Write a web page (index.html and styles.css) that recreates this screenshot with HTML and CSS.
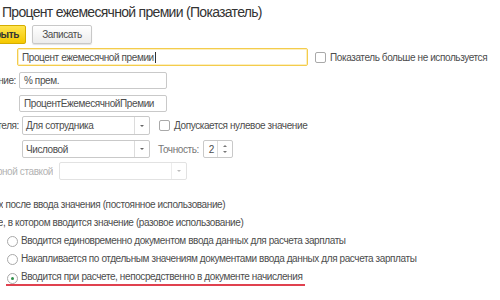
FILE: index.html
```html
<!DOCTYPE html>
<html lang="ru">
  <head>
    <meta charset="UTF-8" />
    <title>Процент ежемесячной премии (Показатель)</title>
    <link rel="stylesheet" href="styles.css">
  </head>
  <body>
    <h1 class="title">Процент ежемесячной премии (Показатель)</h1>

    <div class="toolbar">
      <div class="clip clip-main"><button class="btn btn-main">Записать и закрыть</button></div>
      <button class="btn btn-save">Записать</button>
    </div>

    <div class="row row-name">
      <div class="field field-focus field-name">Процент ежемесячной премии<span class="caret"></span></div>
      <label class="check"><span class="box"></span>Показатель больше не используется</label>
    </div>

    <div class="row row-short">
      <div class="clip label label-short">Краткое наименование:</div>
      <div class="field field-short">% прем.</div>
    </div>

    <div class="row row-id">
      <div class="field field-id">ПроцентЕжемесячнойПремии</div>
    </div>

    <div class="row row-purpose">
      <div class="clip label label-purpose">Назначение показателя:</div>
      <div class="select">
        <span class="select-text">Для сотрудника</span>
        <span class="select-btn"><i class="arrow"></i></span>
      </div>
      <label class="check check-zero"><span class="box"></span>Допускается нулевое значение</label>
    </div>

    <div class="row row-type">
      <div class="select">
        <span class="select-text">Числовой</span>
        <span class="select-btn"><i class="arrow"></i></span>
      </div>
      <span class="label-acc">Точность:</span>
      <div class="spin">
        <span class="spin-value">2</span>
        <span class="spin-btns"><i class="up"></i><i class="down"></i></span>
      </div>
    </div>

    <div class="row row-rate">
      <div class="clip label label-rate">Является тарифной ставкой</div>
      <div class="select select-off">
        <span class="select-text"></span>
        <span class="select-btn"><i class="arrow"></i></span>
      </div>
    </div>

    <div class="usage">
      <div class="line"><span class="clip lead-1">Используется во всех месяцах</span>&nbsp;после ввода значения (постоянное использование)</div>
      <div class="line"><span class="clip lead-2">Используется только в месяце</span>, в котором вводится значение (разовое использование)</div>
      <div class="option"><span class="radio"></span>Вводится единовременно документом ввода данных для расчета зарплаты</div>
      <div class="option"><span class="radio"></span>Накапливается по отдельным значениям документами ввода данных для расчета зарплаты</div>
      <div class="option">
        <span class="marked"><span class="radio radio-on"></span>Вводится при расчете, непосредственно в документе начисления</span>
      </div>
    </div>
  </body>
</html>
```

FILE: styles.css
```css
body {
  margin: 0;
  width: 500px;
  height: 300px;
  overflow: hidden;
  background: #fff;
  font-family: "Liberation Sans", Arial, sans-serif;
  font-size: 10px;
  letter-spacing: -0.4px;
  color: #4d4d4d;
}
.title {
  margin: 0;
  height: 21px;
  padding: 3px 0 0 2px;
  box-sizing: border-box;
  font-size: 14px;
  letter-spacing: -0.7px;
  line-height: 18px;
  font-weight: normal;
  color: #333;
}
.clip {
  display: flex;
  justify-content: flex-end;
  overflow: hidden;
  flex: none;
  white-space: nowrap;
}
.row {
  display: flex;
  align-items: center;
}

/* toolbar */
.toolbar {
  display: flex;
  margin-top: 4px;
  height: 19px;
  gap: 6px;
}
.clip-main {
  width: 26px;
}
.btn {
  height: 19px;
  box-sizing: border-box;
  padding: 0 9px;
  font-family: inherit;
  font-size: 10px;
  letter-spacing: -0.4px;
  color: #4d4d4d;
  background: linear-gradient(#fff, #ececec);
  border: 1px solid #c8c8c8;
  border-radius: 2px;
  box-shadow: 0 1px 1px rgba(0, 0, 0, 0.12);
  white-space: nowrap;
}
.btn-save {
  width: 60px;
  padding: 0;
}
.btn-main {
  padding: 0 6px;
  font-weight: bold;
  color: #333;
  background: linear-gradient(#ffe44f, #f5c800);
  border-color: #d4ad00;
}

/* fields */
.field, .select, .spin {
  box-sizing: border-box;
  display: flex;
  align-items: center;
  background: #fff;
  border: 1px solid #c9c9c9;
  border-radius: 2px;
  white-space: nowrap;
}
.field {
  padding-left: 4px;
}
.field-focus {
  border-color: #f4cc4c;
  box-shadow: inset 0 0 0 1px #fcefc0;
}
.caret {
  width: 1px;
  height: 11px;
  margin-left: 1px;
  background: #333;
}
.row-name {
  margin-top: 4px;
  height: 18px;
}
.field-name {
  margin-left: 17px;
  width: 291px;
  height: 18px;
}
.check {
  display: flex;
  align-items: center;
  margin-left: 7px;
  white-space: nowrap;
}
.box {
  width: 11px;
  height: 11px;
  box-sizing: border-box;
  margin-right: 4px;
  border: 1px solid #a9a9a9;
  border-radius: 2px;
  background: #fff;
}
.row-short {
  margin-top: 6px;
  height: 17px;
}
.label {
  color: #4d4d4d;
}
.label-short {
  width: 16px;
  margin-right: 3px;
}
.field-short, .field-id {
  width: 148px;
  height: 17px;
}
.row-id {
  margin-top: 6px;
  height: 17px;
}
.field-id {
  margin-left: 19px;
}
.row-purpose {
  margin-top: 4px;
  height: 19px;
}
.label-purpose {
  width: 19px;
  margin-right: 3px;
}
.select {
  width: 128px;
  height: 19px;
  justify-content: space-between;
}
.select-text {
  padding-left: 3px;
}
.select-btn {
  width: 14px;
  height: 100%;
  border-left: 1px solid #dcdcdc;
  display: flex;
  align-items: center;
  justify-content: center;
}
.arrow {
  border-left: 2px solid transparent;
  border-right: 2px solid transparent;
  border-top: 2px solid #666;
}
.check-zero {
  margin-left: 9px;
}
.row-type {
  margin-top: 5px;
  height: 18px;
}
.row-type .select {
  margin-left: 22px;
  height: 18px;
}
.label-acc {
  margin-left: 8px;
  color: #777;
}
.spin {
  margin-left: 4px;
  width: 30px;
  height: 18px;
  justify-content: flex-end;
}
.spin-value {
  padding-right: 3px;
}
.spin-btns {
  width: 14px;
  height: 100%;
  border-left: 1px solid #dcdcdc;
  display: flex;
  flex-direction: column;
  align-items: center;
  justify-content: center;
  gap: 4px;
}
.up {
  border-left: 2px solid transparent;
  border-right: 2px solid transparent;
  border-bottom: 2px solid #777;
}
.down {
  border-left: 2px solid transparent;
  border-right: 2px solid transparent;
  border-top: 2px solid #777;
}
.row-rate {
  margin-top: 4px;
  height: 18px;
}
.label-rate {
  width: 53px;
  margin-right: 6px;
  color: #b3b3b3;
}
.select-off {
  height: 18px;
  border-color: #e2e2e2;
}
.select-off .select-btn {
  border-left-color: #ececec;
}
.select-off .arrow {
  border-top-color: #bbb;
}

/* usage */
.usage {
  margin-top: 16px;
  line-height: 18px;
}
.line {
  display: flex;
  height: 18px;
  white-space: nowrap;
}
.lead-1 {
  width: 3px;
}
.lead-2 {
  width: 3px;
}
.option {
  display: flex;
  align-items: center;
  height: 18px;
  padding-left: 7px;
  white-space: nowrap;
}
.radio {
  width: 11px;
  height: 11px;
  box-sizing: border-box;
  margin-right: 3px;
  border: 1px solid #a9a9a9;
  border-radius: 50%;
  background: #fff;
  display: flex;
  align-items: center;
  justify-content: center;
}
.radio-on::after {
  content: "";
  width: 3px;
  height: 3px;
  border-radius: 50%;
  background: #2f8f4a;
}
.marked {
  display: flex;
  align-items: center;
  height: 16px;
  margin-left: -1px;
  padding: 0 3px 0 1px;
  box-sizing: border-box;
  border-bottom: 2px solid #e0414f;
  position: relative;
  top: 1px;
}
.marked .radio {
  margin-top: 2px;
}
```
